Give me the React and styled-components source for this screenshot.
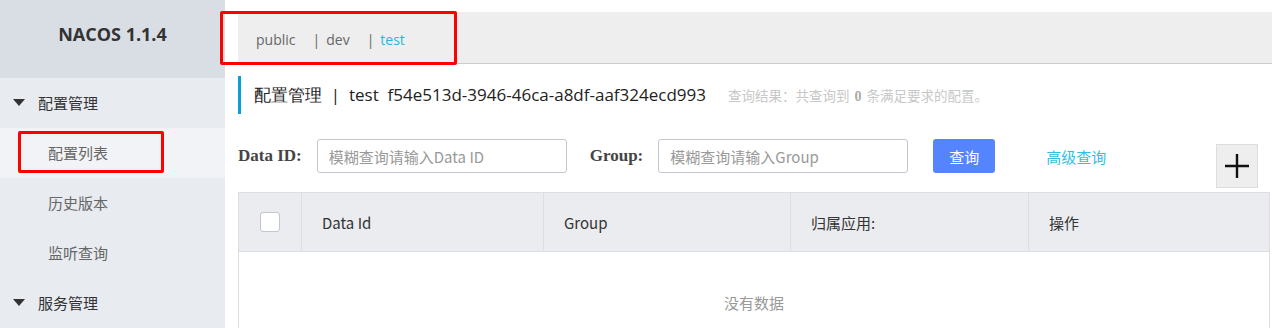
import styled, { createGlobalStyle } from 'styled-components';

const GlobalStyle = createGlobalStyle`
	html, body{
		margin: 0;
		padding: 0;
		background: #fff;
		font-family: "Noto Sans CJK SC", "Open Sans", sans-serif;
		color: #333;
	}
	*{ box-sizing: border-box; }
`;

const menu = [
	{label: '配置管理', group: true},
	{label: '配置列表', active: true},
	{label: '历史版本'},
	{label: '监听查询'},
	{label: '服务管理', group: true},
];

const namespaces = ['public', 'dev', 'test'];
const columns = ['Data Id', 'Group', '归属应用:', '操作'];

function App(){
	return(
		<>
			<GlobalStyle/>
			<Layout>
				<Sidebar>
					<Brand>NACOS 1.1.4</Brand>
					{menu.map((m) => (
						<MenuItem key={m.label} $group={m.group} $active={m.active}>
							{m.group && <Caret/>}
							{m.label}
							{m.active && <Mark $w={146} $h={42} $l={18} $t={3}/>}
						</MenuItem>
					))}
				</Sidebar>
				<Main>
					<NsBar>
						{namespaces.map((n, i) => (
							<Ns key={n} $current={n === 'test'}>
								{i > 0 && <Pipe>|</Pipe>}
								{n}
							</Ns>
						))}
						<Mark $w={237} $h={54} $l={-18} $t={-1}/>
					</NsBar>
					<Content>
						<TitleRow>
							<Title>配置管理&nbsp;&nbsp;|&nbsp;&nbsp;test&nbsp;&nbsp;f54e513d-3946-46ca-a8df-aaf324ecd993</Title>
							<Result>查询结果：共查询到 <b>0</b> 条满足要求的配置。</Result>
						</TitleRow>
						<SearchRow>
							<Label>Data ID:</Label>
							<Input placeholder="模糊查询请输入Data ID"/>
							<Label $ml={23}>Group:</Label>
							<Input placeholder="模糊查询请输入Group"/>
							<QueryButton>查询</QueryButton>
							<Advanced>高级查询</Advanced>
							<AddButton>
								<svg width="26" height="26" viewBox="0 0 26 26">
									<path d="M13 1v24M1 13h24" stroke="#111" strokeWidth="2.4" fill="none"/>
								</svg>
							</AddButton>
						</SearchRow>
						<Table>
							<HeadRow>
								<HeadCell $w={63} $center><Check/></HeadCell>
								<HeadCell $w={242}>{columns[0]}</HeadCell>
								<HeadCell $w={247}>{columns[1]}</HeadCell>
								<HeadCell $w={238}>{columns[2]}</HeadCell>
								<HeadCell $last>{columns[3]}</HeadCell>
							</HeadRow>
							<Empty>没有数据</Empty>
						</Table>
					</Content>
				</Main>
			</Layout>
		</>
	)
}

const Layout = styled.div`
	display: flex;
	width: 1272px;
	height: 328px;
	overflow: hidden;
`

const Sidebar = styled.div`
	width: 225px;
	flex-shrink: 0;
	background: #e8ebf0;
	display: flex;
	flex-direction: column;
`

const Brand = styled.div`
	height: 78px;
	flex-shrink: 0;
	background: #d9dee5;
	display: flex;
	align-items: center;
	justify-content: center;
	font-family: "Open Sans", sans-serif;
	font-weight: 700;
	font-size: 18px;
	color: #333;
	padding-bottom: 10px;
`

const MenuItem = styled.div`
	position: relative;
	height: 50px;
	flex-shrink: 0;
	display: flex;
	align-items: center;
	padding-left: ${p => p.$group ? '13px' : '48px'};
	padding-bottom: 2px;
	font-size: 15px;
	color: ${p => p.$group ? '#333' : '#666'};
	background: ${p => p.$active ? '#f2f3f7' : 'transparent'};
`

const Caret = styled.span`
	width: 0;
	height: 0;
	border-left: 6px solid transparent;
	border-right: 6px solid transparent;
	border-top: 7px solid #333;
	margin-right: 13px;
`

const Mark = styled.div`
	position: absolute;
	left: ${p => p.$l}px;
	top: ${p => p.$t}px;
	width: ${p => p.$w}px;
	height: ${p => p.$h}px;
	border: 3px solid #f00;
	border-radius: 2px;
	pointer-events: none;
`

const Main = styled.div`
	flex: 1;
	padding-top: 12px;
	display: flex;
	flex-direction: column;
	min-width: 0;
`

const NsBar = styled.div`
	position: relative;
	flex-shrink: 0;
	margin-left: 13px;
	height: 52px;
	background: #eee;
	border-bottom: 1px solid #ccc;
	display: flex;
	align-items: center;
	padding-left: 18px;
	padding-top: 4px;
`

const Ns = styled.span`
	font-family: "Open Sans", sans-serif;
	font-size: 14px;
	color: ${p => p.$current ? '#2ab8d8' : '#666'};
	margin-right: 17px;
`

const Pipe = styled.span`
	color: #666;
	margin-right: 6px;
`

const Content = styled.div`
	flex-shrink: 0;
	padding-left: 13px;
	padding-right: 2px;
`

const TitleRow = styled.div`
	margin-top: 12px;
	height: 38px;
	border-left: 3px solid #0c9fd6;
	display: flex;
	align-items: center;
	padding-left: 13px;
`

const Title = styled.span`
	font-family: "Open Sans", sans-serif;
	font-size: 17px;
	color: #222;
`

const Result = styled.span`
	margin-left: 22px;
	font-size: 13.5px;
	color: #c8c8c8;
	b{
		font-family: "Liberation Serif", serif;
		font-size: 14px;
		color: #aaa;
		margin: 0 2px;
	}
`

const SearchRow = styled.div`
	margin-top: 25px;
	height: 34px;
	display: flex;
	align-items: center;
	position: relative;
`

const Label = styled.span`
	font-family: "Liberation Serif", serif;
	font-weight: 700;
	font-size: 17px;
	color: #444;
	margin-left: ${p => p.$ml || 0}px;
	margin-right: 15px;
`

const Input = styled.input`
	width: 250px;
	height: 34px;
	border: 1px solid #c4c6cf;
	border-radius: 3px;
	padding: 0 11px;
	font-family: "Noto Sans CJK SC", "Open Sans", sans-serif;
	font-size: 15px;
	outline: none;
	&::placeholder{ color: #999; }
`

const QueryButton = styled.button`
	margin-left: 25px;
	width: 62px;
	height: 34px;
	border: none;
	border-radius: 3px;
	background: #5584ff;
	color: #fff;
	font-family: "Noto Sans CJK SC", sans-serif;
	font-size: 15px;
`

const Advanced = styled.span`
	margin-left: 51px;
	font-size: 15px;
	color: #33bfe0;
`

const AddButton = styled.div`
	position: absolute;
	right: 12px;
	top: 5px;
	width: 42px;
	height: 44px;
	background: #eee;
	border: 1px solid #ddd;
	display: flex;
	align-items: center;
	justify-content: center;
`

const Table = styled.div`
	margin-top: 19px;
	border: 1px solid #dcdee3;
	height: 200px;
`

const HeadRow = styled.div`
	display: flex;
	height: 59px;
	background: #ebecf0;
	border-bottom: 1px solid #dcdee3;
`

const HeadCell = styled.div`
	width: ${p => p.$w ? p.$w + 'px' : 'auto'};
	flex: ${p => p.$last ? 1 : 'none'};
	display: flex;
	align-items: center;
	justify-content: ${p => p.$center ? 'center' : 'flex-start'};
	padding-left: ${p => p.$center ? 0 : 20}px;
	border-right: ${p => p.$last ? 'none' : '1px solid #dcdee3'};
	font-size: 15px;
	color: #333;
`

const Check = styled.span`
	width: 20px;
	height: 20px;
	background: #fff;
	border: 1px solid #c4c6cf;
	border-radius: 3px;
`

const Empty = styled.div`
	height: 100px;
	display: flex;
	align-items: center;
	justify-content: center;
	font-size: 15px;
	color: #999;
`

export default App;
